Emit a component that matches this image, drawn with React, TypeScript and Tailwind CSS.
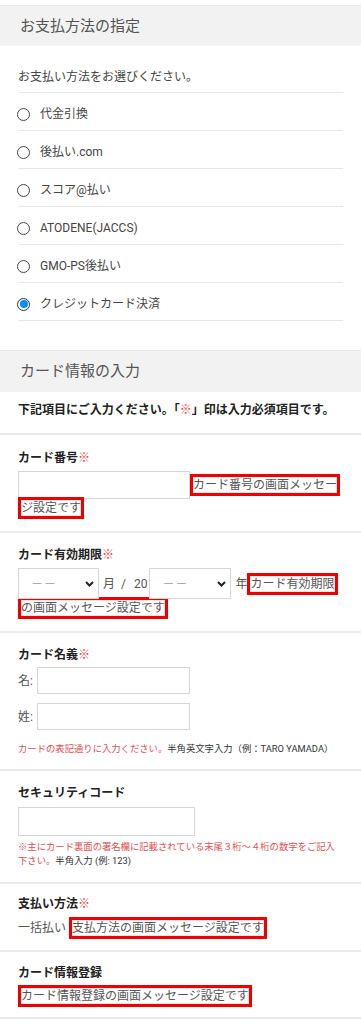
import React from "react";

const box =
  "border-[3px] border-[#ee0000] px-0 py-[1px] box-decoration-clone text-[#555] shadow-[inset_0_0_0_1px_#e6e6e6]";

function Radio({ label, checked }: { label: string; checked?: boolean }) {
  return (
    <div className="h-[38px] border-b border-[#e6e6e6] flex items-center pt-[5px]">
      <span
        className={
          checked
            ? "w-[13px] h-[13px] rounded-full border-[1.5px] border-[#333] flex items-center justify-center -ml-[1px]"
            : "w-[13px] h-[13px] rounded-full border-[1.5px] border-[#444] -ml-[1px]"
        }
      >
        {checked ? <span className="w-[8px] h-[8px] rounded-full bg-[#0a8cf0]" /> : null}
      </span>
      <span className="ml-[10px] text-[12px] text-[#444]">{label}</span>
    </div>
  );
}

function Req() {
  return <span className="text-[#e8383d]">※</span>;
}

function Chevron() {
  return (
    <svg
      className="absolute right-[5px] top-[13px] pointer-events-none"
      width="9"
      height="6"
      viewBox="0 0 9 6"
    >
      <path d="M1 1L4.5 4.5L8 1" fill="none" stroke="#222" strokeWidth="2" />
    </svg>
  );
}

function Sel({ wide }: { wide?: boolean }) {
  return (
    <span className={wide ? "relative inline-block w-[82px] h-[31px]" : "relative inline-block w-[81px] h-[31px]"}>
      <select className="inline-block appearance-none w-full h-[31px] border border-[#d6d6d6] bg-white pl-[12px] text-[#999] tracking-[1px] outline-none">
        <option>－－</option>
      </select>
      <Chevron />
    </span>
  );
}

export default function App() {
  return (
    <div className="w-[361px] bg-white font-[Roboto,'Noto_Sans_CJK_JP',sans-serif] text-[#444]">
      {/* Section 1 */}
      <div className="pt-[5px]">
        <div className="h-[41px] bg-[#f2f2f2] border-t border-[#e9e9e9] flex items-center px-[20px] text-[15px] text-[#555]">
          お支払方法の指定
        </div>
        <div className="px-[18px]">
          <div className="pt-[22px] pb-[6px] leading-[18px] text-[12px] text-[#444] border-b border-[#e6e6e6]">
            お支払い方法をお選びください。
          </div>
          <Radio label="代金引換" />
          <Radio label="後払い.com" />
          <Radio label="スコア@払い" />
          <Radio label="ATODENE(JACCS)" />
          <Radio label="GMO-PS後払い" />
          <Radio label="クレジットカード決済" checked />
        </div>
      </div>

      {/* Section 2 */}
      <div className="mt-[29px]">
        <div className="h-[42px] bg-[#f2f2f2] border-t border-[#e6e6e6] flex items-center px-[20px] text-[15px] text-[#555]">
          カード情報の入力
        </div>
        <div className="px-[18px] pt-[10px] pb-[15px] border-b-2 border-[#ebebeb] text-[12px] leading-[16px] font-bold text-[#222] whitespace-nowrap">
          下記項目にご入力ください。「<span className="text-[#e8383d]">※</span>」印は入力必須項目です。
        </div>

        {/* Card number */}
        <div className="px-[18px] pt-[15px] pb-[14px] border-b-2 border-[#ebebeb]">
          <div className="text-[12px] leading-[16px] font-bold text-[#222]">
            カード番号<Req />
          </div>
          <div className="mt-[5px] text-[12px] leading-[18px] text-[#555]">
            <input className="inline-block w-[172px] h-[28px] border border-[#d6d6d6] bg-white outline-none" />
            <span className={box}>カード番号の画面メッセージ設定です</span>
          </div>
        </div>

        {/* Expiry */}
        <div className="px-[18px] pt-[14px] pb-[14px] border-b-2 border-[#ebebeb]">
          <div className="text-[12px] leading-[16px] font-bold text-[#222]">
            カード有効期限<Req />
          </div>
          <div className="mt-[5px] text-[12px] leading-[18px] text-[#555]">
            <Sel />
            <span className="ml-[4px]">月</span>
            <span className="ml-[6px]">/</span>
            <span className="ml-[8px]">20</span>
            <span className="ml-[2px]" />
            <Sel wide />
            <span className="ml-[4px]">年</span>
            <span className={box}>カード有効期限の画面メッセージ設定です</span>
          </div>
        </div>

        {/* Name */}
        <div className="px-[18px] pt-[14px] pb-[13px] border-b-2 border-[#ebebeb]">
          <div className="text-[12px] leading-[16px] font-bold text-[#222]">
            カード名義<Req />
          </div>
          <div className="mt-[4px] flex items-center text-[12px] text-[#555]">
            <span className="w-[19px]">名:</span>
            <input className="w-[153px] h-[27px] border border-[#d6d6d6] bg-white outline-none" />
          </div>
          <div className="mt-[9px] flex items-center text-[12px] text-[#555]">
            <span className="w-[19px]">姓:</span>
            <input className="w-[153px] h-[27px] border border-[#d6d6d6] bg-white outline-none" />
          </div>
          <div className="mt-[12px] text-[9.33px] leading-[14px] whitespace-nowrap">
            <span className="text-[#dc5050]">カードの表記通りに入力ください。</span>
            <span className="text-[#333]">半角英文字入力（例：TARO YAMADA）</span>
          </div>
        </div>

        {/* Security code */}
        <div className="px-[18px] pt-[14px] pb-[14px] border-b-2 border-[#ebebeb]">
          <div className="text-[12px] leading-[16px] font-bold text-[#222]">セキュリティコード</div>
          <input className="mt-[6px] block w-[177px] h-[29px] border border-[#d6d6d6] bg-white outline-none" />
          <div className="mt-[4px] text-[9.33px] leading-[14px]">
            <span className="text-[#dc5050]">
              ※主にカード裏面の署名欄に記載されている末尾３桁～４桁の数字をご記入下さい。
            </span>
            <span className="text-[#333]">半角入力 (例: 123)</span>
          </div>
        </div>

        {/* Payment method */}
        <div className="px-[18px] pt-[12px] pb-[13px] border-b-2 border-[#ebebeb]">
          <div className="text-[12px] leading-[16px] font-bold text-[#222]">
            支払い方法<Req />
          </div>
          <div className="mt-[7px] text-[12px] leading-[18px] text-[#555]">
            一括払い <span className={box}>支払方法の画面メッセージ設定です</span>
          </div>
        </div>

        {/* Card registration */}
        <div className="px-[18px] pt-[13px] pb-[12px] border-b-2 border-[#ebebeb]">
          <div className="text-[12px] leading-[16px] font-bold text-[#222]">カード情報登録</div>
          <div className="mt-[6px] text-[12px] leading-[18px] text-[#555]">
            <span className={box}>カード情報登録の画面メッセージ設定です</span>
          </div>
        </div>
      </div>
      <div className="h-[8px]" />
    </div>
  );
}
